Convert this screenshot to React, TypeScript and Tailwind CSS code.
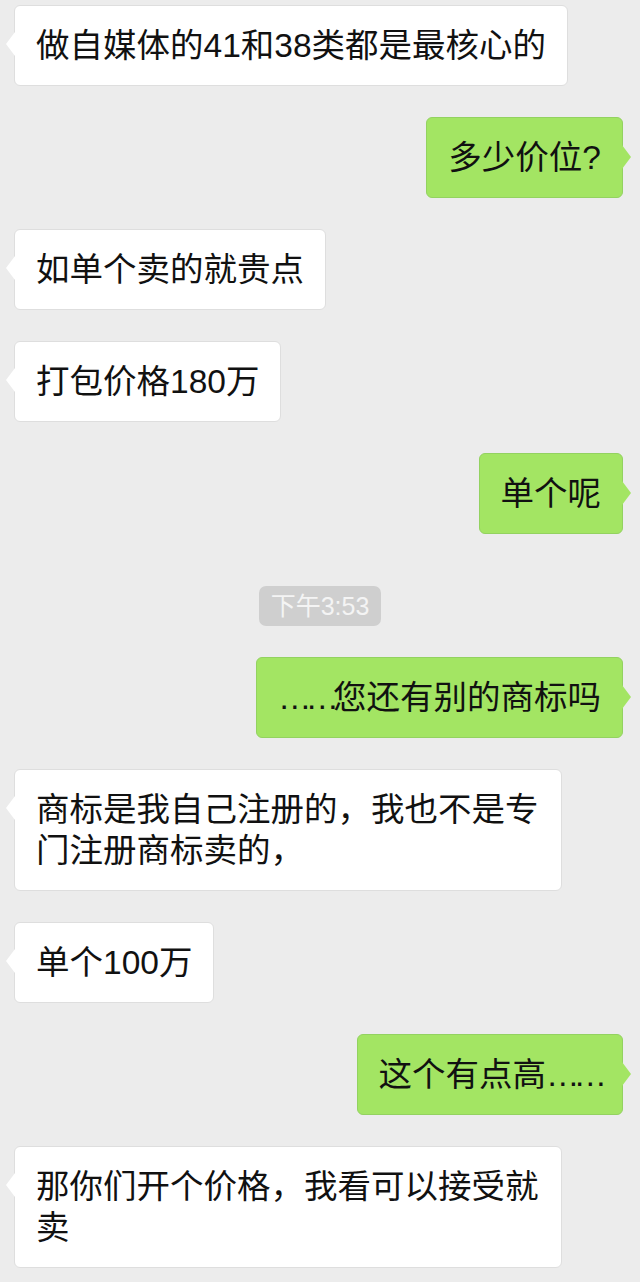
import React from 'react';

type Msg =
  | { kind: 'in' | 'out'; text: string; wide?: boolean }
  | { kind: 'time'; text: string };

const messages: Msg[] = [
  { kind: 'in', text: '做自媒体的41和38类都是最核心的' },
  { kind: 'out', text: '多少价位?' },
  { kind: 'in', text: '如单个卖的就贵点' },
  { kind: 'in', text: '打包价格180万' },
  { kind: 'out', text: '单个呢' },
  { kind: 'time', text: '下午3:53' },
  { kind: 'out', text: '……您还有别的商标吗' },
  { kind: 'in', text: '商标是我自己注册的，我也不是专门注册商标卖的，', wide: true },
  { kind: 'in', text: '单个100万' },
  { kind: 'out', text: '这个有点高……' },
  { kind: 'in', text: '那你们开个价格，我看可以接受就卖', wide: true },
];

// the ellipsis is narrower in the original font
function renderText(text: string) {
  return text.split(/(……)/).map((part, i) =>
    part === '……' ? (
      <span key={i} className="tracking-[-6px]">
        {part}
      </span>
    ) : (
      <React.Fragment key={i}>{part}</React.Fragment>
    )
  );
}

function Bubble({ side, text, wide }: { side: 'in' | 'out'; text: string; wide?: boolean }) {
  const isOut = side === 'out';
  return (
    <div className={isOut ? 'flex justify-end pr-[17px]' : 'flex justify-start pl-[14px]'}>
      <div
        className={
          isOut
            ? 'relative max-w-[560px] rounded-[6px] border border-[#93d260] bg-[#a3e563] px-[21px] py-[19px] text-[33.5px] leading-[41px] text-[#111]'
            : wide
              ? 'relative w-[548px] rounded-[6px] border border-[#dedede] bg-white px-[21px] py-[19px] text-[33.5px] leading-[41px] text-[#111]'
              : 'relative max-w-[560px] rounded-[6px] border border-[#dedede] bg-white px-[21px] py-[19px] text-[33.5px] leading-[41px] text-[#111]'
        }
      >
        {isOut ? (
          <span className="absolute right-[-9px] top-[27px] h-0 w-0 border-y-[12px] border-l-[9px] border-y-transparent border-l-[#a3e563]" />
        ) : (
          <span className="absolute left-[-9px] top-[26px] h-0 w-0 border-y-[12px] border-r-[9px] border-y-transparent border-r-white" />
        )}
        <p className="break-all">{renderText(text)}</p>
      </div>
    </div>
  );
}

export default function App() {
  return (
    <div
      className="min-h-[1282px] w-[640px] bg-[#ececec] pt-[5px]"
      style={{ fontFamily: '"Liberation Sans", "Noto Sans CJK SC", sans-serif' }}
    >
      <div className="flex flex-col gap-[31px]">
        {messages.map((m, i) =>
          m.kind === 'time' ? (
            <div key={i} className="mt-[21px] flex justify-center">
              <span className="rounded-[7px] bg-[#cfcfcf] px-[12px] text-[25px] leading-[40px] text-[#f4f4f4]">
                {m.text}
              </span>
            </div>
          ) : (
            <Bubble key={i} side={m.kind} text={m.text} wide={m.wide} />
          )
        )}
      </div>
    </div>
  );
}
